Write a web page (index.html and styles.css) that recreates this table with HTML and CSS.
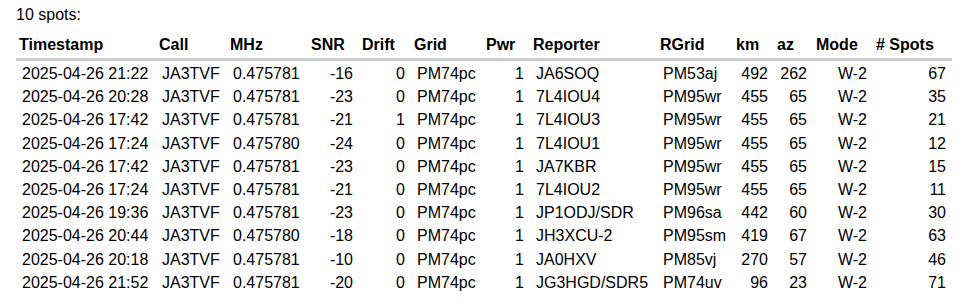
FILE: index.html
```html
<!DOCTYPE html>
<html lang="en">
<head>
    <meta charset="UTF-8">
    <title>Spots</title>
    <link rel="stylesheet" href="styles.css">
</head>
<body>
    <div class="page">
        <p class="count">10 spots:</p>

        <table class="spots">
            <colgroup>
                <col class="c-time">
                <col class="c-call">
                <col class="c-mhz">
                <col class="c-snr">
                <col class="c-drift">
                <col class="c-grid">
                <col class="c-pwr">
                <col class="c-reporter">
                <col class="c-rgrid">
                <col class="c-km">
                <col class="c-az">
                <col class="c-mode">
                <col class="c-count">
            </colgroup>
            <thead>
                <tr>
                    <th>Timestamp</th>
                    <th>Call</th>
                    <th>MHz</th>
                    <th>SNR</th>
                    <th>Drift</th>
                    <th>Grid</th>
                    <th>Pwr</th>
                    <th>Reporter</th>
                    <th>RGrid</th>
                    <th>km</th>
                    <th>az</th>
                    <th>Mode</th>
                    <th># Spots</th>
                </tr>
            </thead>
            <tbody>
                <tr><td>2025-04-26 21:22</td><td>JA3TVF</td><td>0.475781</td><td class="num">-16</td><td class="num">0</td><td>PM74pc</td><td class="num">1</td><td>JA6SOQ</td><td>PM53aj</td><td class="num">492</td><td class="num">262</td><td class="num">W-2</td><td class="num">67</td></tr>
                <tr><td>2025-04-26 20:28</td><td>JA3TVF</td><td>0.475781</td><td class="num">-23</td><td class="num">0</td><td>PM74pc</td><td class="num">1</td><td>7L4IOU4</td><td>PM95wr</td><td class="num">455</td><td class="num">65</td><td class="num">W-2</td><td class="num">35</td></tr>
                <tr><td>2025-04-26 17:42</td><td>JA3TVF</td><td>0.475781</td><td class="num">-21</td><td class="num">1</td><td>PM74pc</td><td class="num">1</td><td>7L4IOU3</td><td>PM95wr</td><td class="num">455</td><td class="num">65</td><td class="num">W-2</td><td class="num">21</td></tr>
                <tr><td>2025-04-26 17:24</td><td>JA3TVF</td><td>0.475780</td><td class="num">-24</td><td class="num">0</td><td>PM74pc</td><td class="num">1</td><td>7L4IOU1</td><td>PM95wr</td><td class="num">455</td><td class="num">65</td><td class="num">W-2</td><td class="num">12</td></tr>
                <tr><td>2025-04-26 17:42</td><td>JA3TVF</td><td>0.475781</td><td class="num">-23</td><td class="num">0</td><td>PM74pc</td><td class="num">1</td><td>JA7KBR</td><td>PM95wr</td><td class="num">455</td><td class="num">65</td><td class="num">W-2</td><td class="num">15</td></tr>
                <tr><td>2025-04-26 17:24</td><td>JA3TVF</td><td>0.475781</td><td class="num">-21</td><td class="num">0</td><td>PM74pc</td><td class="num">1</td><td>7L4IOU2</td><td>PM95wr</td><td class="num">455</td><td class="num">65</td><td class="num">W-2</td><td class="num">11</td></tr>
                <tr><td>2025-04-26 19:36</td><td>JA3TVF</td><td>0.475781</td><td class="num">-23</td><td class="num">0</td><td>PM74pc</td><td class="num">1</td><td>JP1ODJ/SDR</td><td>PM96sa</td><td class="num">442</td><td class="num">60</td><td class="num">W-2</td><td class="num">30</td></tr>
                <tr><td>2025-04-26 20:44</td><td>JA3TVF</td><td>0.475780</td><td class="num">-18</td><td class="num">0</td><td>PM74pc</td><td class="num">1</td><td>JH3XCU-2</td><td>PM95sm</td><td class="num">419</td><td class="num">67</td><td class="num">W-2</td><td class="num">63</td></tr>
                <tr><td>2025-04-26 20:18</td><td>JA3TVF</td><td>0.475781</td><td class="num">-10</td><td class="num">0</td><td>PM74pc</td><td class="num">1</td><td>JA0HXV</td><td>PM85vj</td><td class="num">270</td><td class="num">57</td><td class="num">W-2</td><td class="num">46</td></tr>
                <tr><td>2025-04-26 21:52</td><td>JA3TVF</td><td>0.475781</td><td class="num">-20</td><td class="num">0</td><td>PM74pc</td><td class="num">1</td><td>JG3HGD/SDR5</td><td>PM74uv</td><td class="num">96</td><td class="num">23</td><td class="num">W-2</td><td class="num">71</td></tr>
            </tbody>
        </table>
    </div>
</body>
</html>
```

FILE: styles.css
```css
body {
    margin: 0;
    font-family: 'Liberation Sans', Arial, sans-serif;
    font-size: 16px;
    color: #000000;
    background-color: #ffffff;
}

.page {
    padding: 6px 16px 0 16px;
}

.count {
    margin: 0 0 12px 0;
    line-height: 18px;
}

.spots {
    border-collapse: collapse;
    table-layout: fixed;
    width: 936px;
}

.spots th {
    text-align: left;
    font-weight: bold;
    line-height: 18px;
    padding: 0 3px 4px 3px;
    border-bottom: 3px solid #cccccc;
    white-space: nowrap;
}

.spots td {
    line-height: 19.2px;
    padding: 2px 6px;
    white-space: nowrap;
}

.spots td.num {
    text-align: right;
}

.spots tbody tr:first-child td {
    padding-top: 3px;
}

.c-time { width: 140px; }
.c-call { width: 71px; }
.c-mhz { width: 81px; }
.c-snr { width: 51px; }
.c-drift { width: 52px; }
.c-grid { width: 72px; }
.c-pwr { width: 47px; }
.c-reporter { width: 127px; }
.c-rgrid { width: 76px; }
.c-km { width: 41px; }
.c-az { width: 39px; }
.c-mode { width: 60px; }
.c-count { width: 79px; }
```
